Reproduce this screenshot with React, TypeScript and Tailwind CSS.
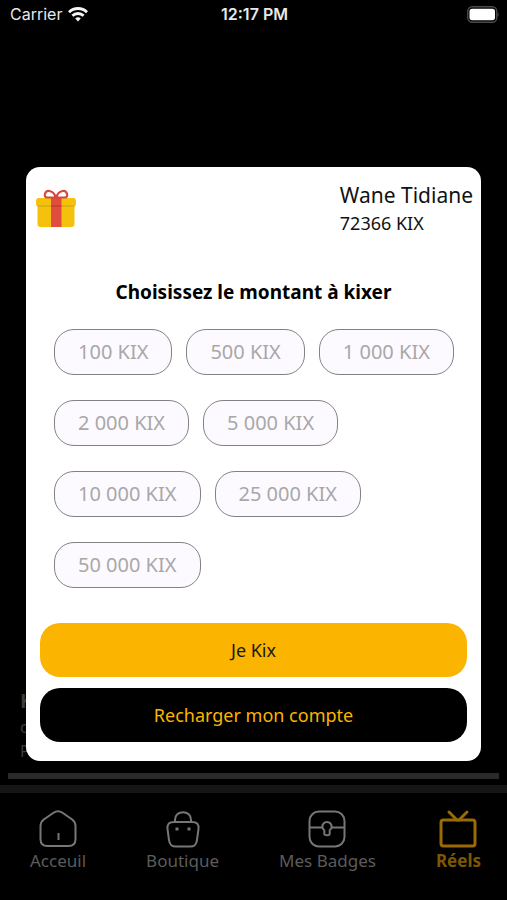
import React from "react";

const amounts = ["100", "500", "1 000", "2 000", "5 000", "10 000", "25 000", "50 000"];

function WifiIcon() {
  return (
    <svg width="20" height="16" viewBox="0 0 20 16" fill="none" stroke="#f5f5f5" strokeWidth="2.8" aria-hidden="true">
      <path d="M1 6.2a12.8 12.8 0 0 1 18 0" />
      <path d="M4.4 9.8a8 8 0 0 1 11.2 0" />
      <path d="M10 15.4 7.2 12.5a4 4 0 0 1 5.6 0Z" fill="#f5f5f5" stroke="none" />
    </svg>
  );
}

function BatteryIcon() {
  return (
    <svg width="33" height="17" viewBox="0 0 33 17" fill="none" aria-hidden="true">
      <rect x="1.75" y="0.75" width="29" height="15.5" rx="4.5" stroke="#4a4a4a" strokeWidth="1.4" />
      <rect x="3.5" y="2.8" width="25.5" height="11.4" rx="2.6" fill="#fff" />
      <path d="M31.500 6.2v4.6c1.500-.9 1.500-3.7 0-4.6Z" fill="#4a4a4a" />
    </svg>
  );
}

function GiftIcon() {
  return (
    <svg width="42" height="42" viewBox="0 0 42 42" aria-hidden="true">
      <rect x="2.5" y="12" width="37" height="27" rx="3" fill="#f4c20d" />
      <rect x="1" y="10" width="40" height="8.5" rx="3" fill="#f4c20d" />
      <path d="M2.5 18h37" stroke="#dfa914" strokeWidth="1.3" />
      <rect x="16" y="10" width="10.5" height="29" fill="#e24c3f" />
      <path d="M16 18h10.5" stroke="#c0392f" strokeWidth="1.3" />
      <g fill="none" stroke="#d34a40" strokeWidth="2.2" strokeLinejoin="round">
        <path d="M20.500 9.500h-8c-5 0-2.500-7.500 2-6.500 3.500.7 5.500 3.500 6 6.500Z" />
        <path d="M21.500 9.500h8c5 0 2.500-7.500-2-6.500-3.500.7-5.500 3.500-6 6.500Z" />
      </g>
    </svg>
  );
}

function HomeIcon() {
  return (
    <svg width="40" height="40" viewBox="0 0 40 40" fill="none" stroke="#777" strokeWidth="2" aria-hidden="true">
      <path d="M15.500 3.800 5.800 10.500Q2.500 13 2.500 17v13q0 7 7 7h21q7 0 7-7V17q0-4-3.300-6.500L24.500 3.800Q20 .8 15.500 3.800Z" />
      <path d="M20.500 24v7" />
    </svg>
  );
}

function BagIcon() {
  return (
    <svg width="40" height="40" viewBox="0 0 40 40" fill="none" stroke="#777" strokeWidth="2" aria-hidden="true">
      <path d="M11.500 13h17c6 0 7.500 2.500 7 7l-1.500 11c-.6 4.500-2 6.500-7 6.500H13c-5 0-6.400-2-7-6.500L4.500 20c-.5-4.500 1-7 7-7Z" />
      <path d="M12 13v-2c0-10.500 16-10.500 16 0v2" />
      <rect x="12.500" y="18.500" width="3" height="3" fill="#777" stroke="none" />
      <rect x="24.500" y="18.500" width="3" height="3" fill="#777" stroke="none" />
    </svg>
  );
}

function BadgeIcon() {
  return (
    <svg width="40" height="40" viewBox="0 0 40 40" fill="none" stroke="#777" strokeWidth="2" aria-hidden="true">
      <rect x="2.500" y="2.500" width="35" height="35" rx="9.500" />
      <path d="M2.500 18.500H16M24 18.500h13.500" />
      <path d="M17.300 21.300a4.600 4.600 0 1 1 5.400 0v3.500c0 2-5.400 2-5.400 0Z" />
    </svg>
  );
}

function TvIcon() {
  return (
    <svg width="40" height="40" viewBox="0 0 40 40" fill="none" stroke="#9a6b02" strokeWidth="3" strokeLinecap="round" aria-hidden="true">
      <rect x="3" y="11" width="34" height="26" rx="2.500" />
      <path d="m11 3 8 8M29 3l-8 8" />
    </svg>
  );
}

const tabs = [
  { label: "Acceuil", icon: <HomeIcon />, style: "text-[#5c5c5c]" },
  { label: "Boutique", icon: <BagIcon />, style: "text-[#5c5c5c]" },
  { label: "Mes Badges", icon: <BadgeIcon />, style: "text-[#5c5c5c]" },
  { label: "Réels", icon: <TvIcon />, style: "font-bold text-[#7d5802]" },
];

export default function App() {
  return (
    <div className="relative flex min-h-screen flex-col bg-black font-['Noto_Sans',sans-serif]">
      <header className="grid h-7 grid-cols-3 items-center pr-2 pl-2.5 font-[Inter,sans-serif] text-base text-[#e8e8e8]">
        <div className="flex items-center gap-1.5">
          <span>Carrier</span>
          <WifiIcon />
        </div>
        <time className="text-center font-semibold whitespace-nowrap">12:17 PM</time>
        <div className="flex justify-end">
          <BatteryIcon />
        </div>
      </header>

      <main className="flex flex-1 flex-col justify-end">
        <div className="px-5 pb-2.5 text-[#3c3c3c]">
          <p className="text-xl leading-7 font-bold">K</p>
          <p className="text-base leading-6">c</p>
          <p className="text-base leading-6">P</p>
        </div>
        <div className="mx-2 h-1.5 bg-[#2a2a2d]" />
      </main>

      <nav className="mt-1.5 border-t-8 border-[#151515] pt-4 pr-[26px] pb-[27px] pl-[30px]">
        <ul className="flex justify-between">
          {tabs.map((tab) => (
            <li key={tab.label}>
              <a href="#" className={`flex flex-col items-center text-[17px] leading-6 ${tab.style}`}>
                {tab.icon}
                {tab.label}
              </a>
            </li>
          ))}
        </ul>
      </nav>

      <div className="absolute inset-x-0 top-7 bottom-0 flex items-center justify-center px-[26px]">
        <section role="dialog" aria-labelledby="dialog-title" className="w-full rounded-[14px] bg-white pb-[19px] text-[#111]">
          <div className="flex items-start justify-between pt-3.5 pr-2 pl-[9px]">
            <div className="pt-[7px]">
              <GiftIcon />
            </div>
            <div>
              <p className="text-[21px] leading-7">Wane Tidiane</p>
              <p className="text-lg leading-7">72366 KIX</p>
            </div>
          </div>
          <h1 id="dialog-title" className="mt-[41px] text-center text-[19px] leading-7 font-bold text-black">
            Choisissez le montant à kixer
          </h1>
          <div className="mt-[23px] flex flex-wrap gap-x-3.5 gap-y-[25px] pr-4 pl-7">
            {amounts.map((amount) => (
              <button
                key={amount}
                type="button"
                className="h-[46px] rounded-[20px] border border-[#828282] bg-[#fdfaff] px-[23px] text-xl text-[#a8a8a8]"
              >
                {amount} KIX
              </button>
            ))}
          </div>
          <div className="mt-[35px] flex flex-col gap-[11px] px-3.5 text-lg">
            <button type="button" className="h-[54px] rounded-[20px] bg-[#fbb500] text-[#181818]">
              Je Kix
            </button>
            <button type="button" className="h-[54px] rounded-[20px] bg-black text-[#fbb500]">
              Recharger mon compte
            </button>
          </div>
        </section>
      </div>
    </div>
  );
}
